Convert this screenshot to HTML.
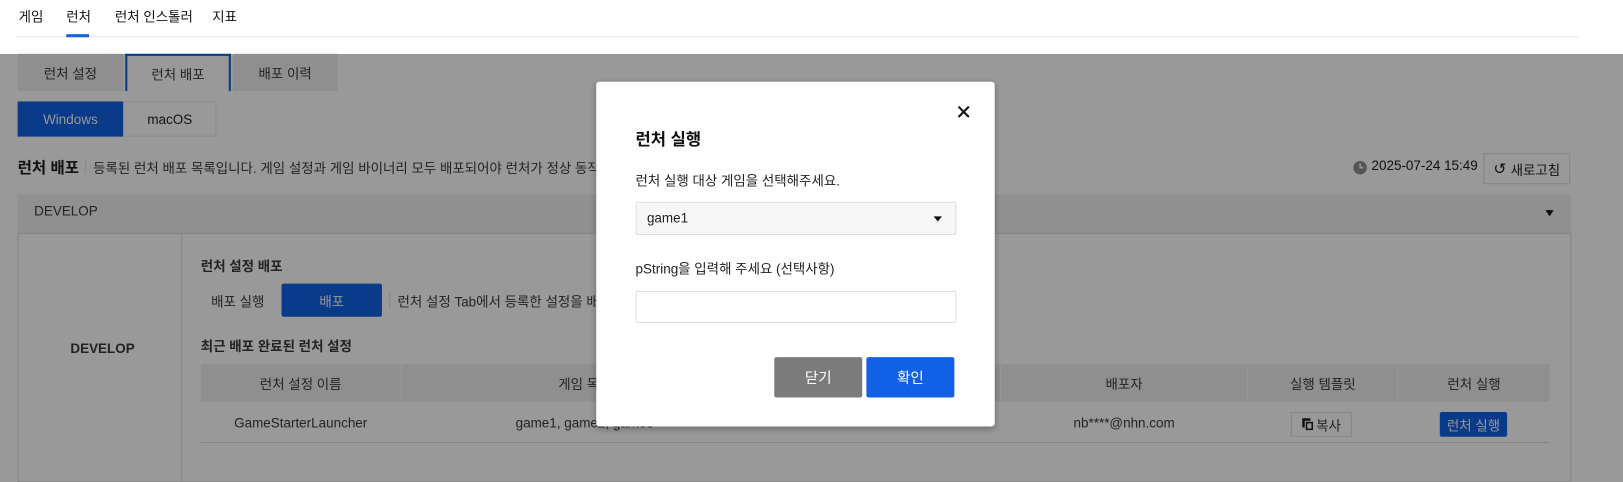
<!DOCTYPE html>
<html><head><meta charset="utf-8"><style>
*{box-sizing:border-box;margin:0;padding:0}
body{width:1623px;height:454px;overflow:hidden;background:#999;font-family:"Liberation Sans","Noto Sans CJK KR",sans-serif;font-size:13px;color:#111;position:relative}
#w{position:absolute;left:0;top:0;width:1568px;height:439px;transform:scale(1.0351);transform-origin:0 0}
.a{position:absolute;white-space:nowrap}
.c{display:flex;align-items:center;justify-content:center}
</style></head><body>
<div class="a" style="left:0;top:0;width:1623px;height:54px;background:#fff"></div>
<div id="w">
<div class="a" style="left:16px;top:35px;width:1509px;height:1px;background:#e8e8e8"></div>
<div class="a" style="left:18px;top:6px;">게임</div>
<div class="a" style="left:64px;top:6px;">런처</div>
<div class="a" style="left:111px;top:6px;">런처 인스톨러</div>
<div class="a" style="left:205px;top:6px;">지표</div>
<div class="a" style="left:64px;top:33px;width:22px;height:3px;background:#1a5fe0"></div>

<div class="a c" style="left:17px;top:52px;width:102px;height:36px;background:#8f8f8f;color:#222">런처 설정</div>
<div class="a c" style="left:121px;top:52px;width:102px;height:36px;background:#999;border:2px solid #0a3a8a;border-bottom:none;color:#222">런처 배포</div>
<div class="a c" style="left:225px;top:52px;width:101px;height:36px;background:#8f8f8f;color:#222">배포 이력</div>

<div class="a c" style="left:17px;top:98px;width:102px;height:34px;background:#0a3a8a;color:#999">Windows</div>
<div class="a c" style="left:119px;top:98px;width:90px;height:34px;border:1px solid #8c8c8c;color:#111">macOS</div>

<div class="a" style="left:17px;top:151px;font-size:15px;font-weight:bold">런처 배포</div>
<div class="a" style="left:82px;top:154px;width:1px;height:14px;background:#888"></div>
<div class="a" style="left:90px;top:152px;color:#222">등록된 런처 배포 목록입니다. 게임 설정과 게임 바이너리 모두 배포되어야 런처가 정상 동작합니다.</div>

<svg class="a" style="left:1307px;top:155px" width="14" height="14"><circle cx="7" cy="7" r="6.5" fill="#555"/><path d="M7 3v4h3" stroke="#999" stroke-width="1.5" fill="none"/></svg>
<div class="a" style="left:1325px;top:152px;color:#111">2025-07-24 15:49</div>
<div class="a c" style="left:1433px;top:148px;width:84px;height:30px;border:1px solid #858585;color:#111"><span style="font-size:15px;margin-right:4px">&#x21BA;</span>새로고침</div>

<div class="a" style="left:17px;top:188px;width:1501px;height:38px;background:#909090;border-bottom:1px solid #858585"></div>
<div class="a" style="left:33px;top:196px;color:#222">DEVELOP</div>
<div class="a" style="left:1493px;top:203px;width:0;height:0;border-left:4px solid transparent;border-right:4px solid transparent;border-top:6px solid #111"></div>
<div class="a" style="left:17px;top:226px;width:1501px;height:240px;border:1px solid #858585;border-top:none"></div>
<div class="a" style="left:175px;top:226px;width:1px;height:240px;background:#858585"></div>
<div class="a" style="left:68px;top:329px;font-weight:bold;color:#222">DEVELOP</div>

<div class="a" style="left:194px;top:247px;font-weight:bold;color:#222">런처 설정 배포</div>
<div class="a" style="left:204px;top:281px;color:#222">배포 실행</div>
<div class="a c" style="left:272px;top:274px;width:97px;height:32px;background:#0a3a8a;color:#999;border-radius:2px">배포</div>
<div class="a" style="left:376px;top:282px;width:1px;height:16px;background:#888"></div>
<div class="a" style="left:384px;top:281px;color:#222">런처 설정 Tab에서 등록한 설정을 배포합니다.</div>
<div class="a" style="left:194px;top:324px;font-weight:bold;color:#222">최근 배포 완료된 런처 설정</div>

<div class="a" style="left:194px;top:352px;width:1303px;height:36px;background:#8f8f8f"></div>
<div class="a c" style="left:194px;top:352px;width:193px;height:36px;color:#222">런처 설정 이름</div>
<div class="a" style="left:387px;top:352px;width:1px;height:36px;background:#999"></div>
<div class="a c" style="left:388px;top:352px;width:354px;height:36px;color:#222">게임 목록</div>
<div class="a" style="left:966px;top:352px;width:1px;height:36px;background:#999"></div>
<div class="a c" style="left:967px;top:352px;width:238px;height:36px;color:#222">배포자</div>
<div class="a" style="left:1205px;top:352px;width:1px;height:36px;background:#999"></div>
<div class="a c" style="left:1206px;top:352px;width:144px;height:36px;color:#222">실행 템플릿</div>
<div class="a" style="left:1350px;top:352px;width:1px;height:36px;background:#999"></div>
<div class="a c" style="left:1351px;top:352px;width:146px;height:36px;color:#222">런처 실행</div>
<div class="a" style="left:194px;top:427px;width:1303px;height:1px;background:#858585"></div>
<div class="a c" style="left:194px;top:390px;width:193px;height:36px;color:#222">GameStarterLauncher</div>
<div class="a c" style="left:388px;top:390px;width:354px;height:36px;color:#222">game1, game2, game3</div>
<div class="a c" style="left:967px;top:390px;width:238px;height:36px;color:#222">nb****@nhn.com</div>
<div class="a c" style="left:1247px;top:398px;width:59px;height:24px;border:1px solid #858585;color:#222"><svg width="12" height="12" style="margin-right:2px"><rect x="0" y="0" width="8" height="9" fill="#111"/><rect x="3" y="3" width="8" height="9" fill="#111" stroke="#999" stroke-width="1"/><rect x="5" y="5" width="4" height="5" fill="#999"/></svg>복사</div>
<div class="a c" style="left:1391px;top:398px;width:65px;height:24px;background:#0a3a8a;color:#999;border-radius:2px">런처 실행</div>

<div class="a" style="left:576px;top:79px;width:385px;height:333px;background:#fff;border-radius:3px;box-shadow:0 2px 6px rgba(0,0,0,.3)"></div>
<svg class="a" style="left:925px;top:102px" width="12" height="12"><path d="M1 1L11 11M11 1L1 11" stroke="#111" stroke-width="2"/></svg>
<div class="a" style="left:614px;top:121px;font-size:16px;font-weight:bold;color:#111">런처 실행</div>
<div class="a" style="left:614px;top:164px;color:#222">런처 실행 대상 게임을 선택해주세요.</div>
<div class="a" style="left:614px;top:195px;width:310px;height:32px;background:#f7f7f7;border:1px solid #ddd;border-radius:2px"></div>
<div class="a" style="left:625px;top:203px;color:#222">game1</div>
<div class="a" style="left:902px;top:209px;width:0;height:0;border-left:4px solid transparent;border-right:4px solid transparent;border-top:5px solid #111"></div>
<div class="a" style="left:614px;top:249px;color:#222">pString을 입력해 주세요 (선택사항)</div>
<div class="a" style="left:614px;top:281px;width:310px;height:31px;background:#fff;border:1px solid #ddd;border-radius:2px"></div>
<div class="a c" style="left:748px;top:345px;width:85px;height:39px;background:#7b7b7b;color:#fff;font-size:14px;border-radius:2px">닫기</div>
<div class="a c" style="left:837px;top:345px;width:85px;height:39px;background:#1160e6;color:#fff;font-size:14px;border-radius:2px">확인</div>
</div>
</body></html>
